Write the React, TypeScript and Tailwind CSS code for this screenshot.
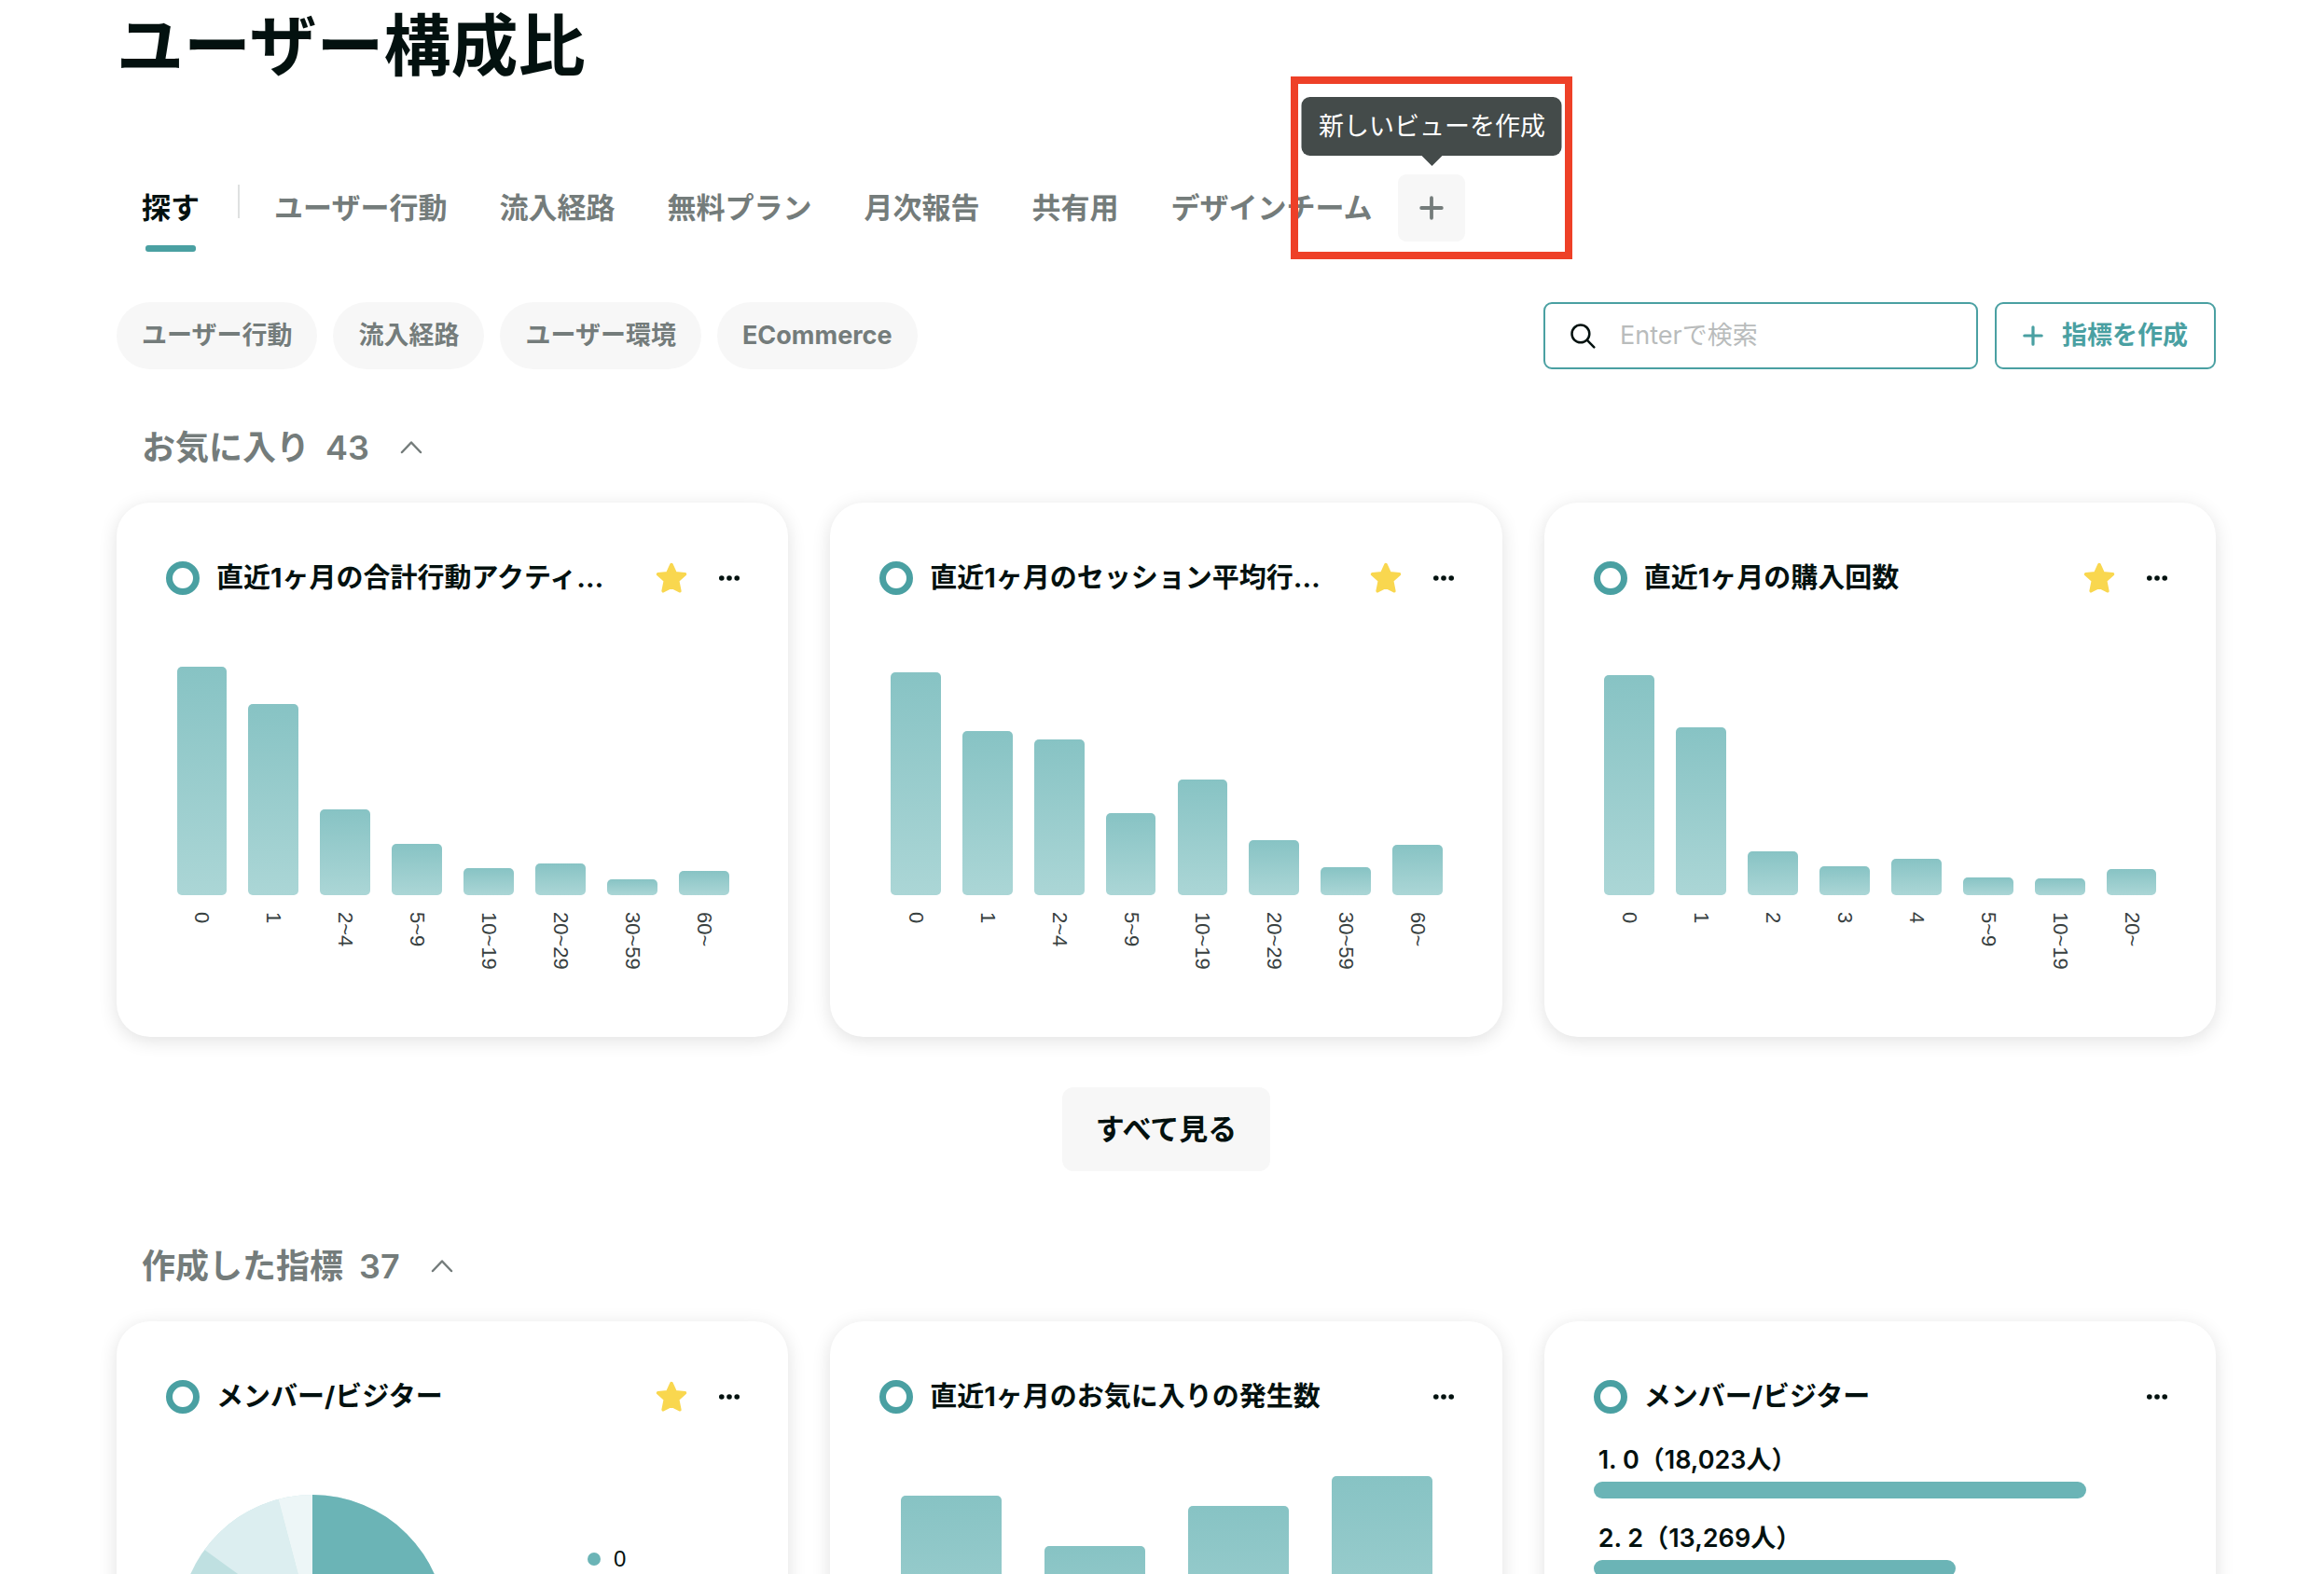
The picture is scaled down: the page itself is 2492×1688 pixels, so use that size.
import { useState } from 'react';

type Bar = { label?: string; value: number };

const tabs = ['ユーザー行動', '流入経路', '無料プラン', '月次報告', '共有用', 'デザインチーム'];
const chips = ['ユーザー行動', '流入経路', 'ユーザー環境', 'ECommerce'];

const activity: Bar[] = [
  { label: '0', value: 245 },
  { label: '1', value: 205 },
  { label: '2~4', value: 92 },
  { label: '5~9', value: 55 },
  { label: '10~19', value: 29 },
  { label: '20~29', value: 34 },
  { label: '30~59', value: 17 },
  { label: '60~', value: 26 },
];

const sessions: Bar[] = [
  { label: '0', value: 239 },
  { label: '1', value: 176 },
  { label: '2~4', value: 167 },
  { label: '5~9', value: 88 },
  { label: '10~19', value: 124 },
  { label: '20~29', value: 59 },
  { label: '30~59', value: 30 },
  { label: '60~', value: 54 },
];

const purchases: Bar[] = [
  { label: '0', value: 236 },
  { label: '1', value: 180 },
  { label: '2', value: 47 },
  { label: '3', value: 31 },
  { label: '4', value: 39 },
  { label: '5~9', value: 19 },
  { label: '10~19', value: 18 },
  { label: '20~', value: 28 },
];

const favorites: Bar[] = [{ value: 234 }, { value: 180 }, { value: 223 }, { value: 255 }];

const ranking = [
  { label: '1. 0（18,023人）', count: 18023 },
  { label: '2. 2（13,269人）', count: 13269 },
];

function PlusIcon({ className }: { className?: string }) {
  return (
    <svg viewBox="0 0 24 24" className={className} fill="none" stroke="currentColor" strokeWidth="3.5" strokeLinecap="round">
      <path d="M12 2v20M2 12h20" />
    </svg>
  );
}

function StarIcon() {
  return (
    <svg viewBox="0 0 34 34" className="size-[34px]" fill="#f9d74f" stroke="#f9d74f" strokeWidth="3.5" strokeLinejoin="round">
      <path d="M17 2.500l4.200 9.300 10.300 1-7.800 7 2.200 11L17 26.300 8.100 30.800l2.200-11-7.800-7 10.300-1z" />
    </svg>
  );
}

function Card({ title, starred, children }: { title: string; starred?: boolean; children: React.ReactNode }) {
  return (
    <article className="flex h-[573px] min-w-0 flex-col rounded-[36px] bg-white pt-[60px] pr-[52px] pl-[53px] shadow-[0_4px_20px_rgba(0,0,0,0.12)]">
      <header className="flex h-[42px] items-center">
        <span className="size-9 shrink-0 rounded-full border-[7px] border-[#4aa0a2]" />
        <h3 className="ml-[18px] min-w-0 flex-1 truncate text-[29px] leading-[42px] font-bold">{title}</h3>
        {starred && (
          <button aria-label="お気に入り" className="ml-4 shrink-0">
            <StarIcon />
          </button>
        )}
        <button aria-label="メニュー" className="ml-[34px] shrink-0">
          <svg viewBox="0 0 22 6" className="h-[6px] w-[22px]" fill="currentColor">
            <circle cx="2.800" cy="3" r="2.800" />
            <circle cx="11" cy="3" r="2.800" />
            <circle cx="19.200" cy="3" r="2.800" />
          </svg>
        </button>
      </header>
      {children}
    </article>
  );
}

function BarChart({ bars }: { bars: Bar[] }) {
  return (
    <div className="mt-[63px] flex">
      {bars.map((bar, i) => (
        <div key={i} className="flex flex-1 flex-col items-center">
          <div className="flex h-64 w-full items-end justify-center">
            <div
              className="w-[70%] rounded-[5px] bg-linear-to-b from-[#87c3c4] to-[#abd6d6]"
              style={{ height: bar.value }}
            />
          </div>
          {bar.label && (
            <span className="mt-[18px] font-['Liberation_Sans',sans-serif] text-[22px] leading-[28px] whitespace-nowrap text-[#37403f] [writing-mode:vertical-rl]">
              {bar.label}
            </span>
          )}
        </div>
      ))}
    </div>
  );
}

function PieChart() {
  return (
    <div className="mt-[84px] flex">
      <svg viewBox="-143 -143 286 286" className="ml-[14px] size-[286px] shrink-0">
        <circle r="143" fill="#bfe0e1" />
        <path d="M0 0V-143A143 143 0 0 1 0 143z" fill="#6bb4b6" />
        <path d="M0 0L-115.700-84A143 143 0 0 1-36.600-138.200z" fill="#dceef0" />
        <path d="M0 0L-36.600-138.200A143 143 0 0 1 0-143z" fill="#edf6f7" />
      </svg>
      <ul className="mt-[53px] ml-[152px]">
        <li className="flex items-center gap-[14px] font-['Liberation_Sans',sans-serif] text-[24px] leading-[32px]">
          <span className="size-[14px] rounded-full bg-[#6bb4b6]" />0
        </li>
      </ul>
    </div>
  );
}

function RankingList() {
  return (
    <ol className="mt-[29px] flex flex-col gap-[25px]">
      {ranking.map((row) => (
        <li key={row.label}>
          <p className="pl-[5px] text-[27px] leading-9 font-semibold">{row.label}</p>
          <div
            className="mt-[5px] h-[18px] rounded-full bg-[#6bb4b6]"
            style={{ width: `${(row.count / 21000) * 100}%` }}
          />
        </li>
      ))}
    </ol>
  );
}

function Section({ title, count, children }: { title: string; count: number; children: React.ReactNode }) {
  const [open, setOpen] = useState(true);

  return (
    <section>
      <button
        onClick={() => setOpen(!open)}
        aria-expanded={open}
        className="ml-[27px] flex items-center text-[36px] leading-[54px] font-bold text-[#747c7b]"
      >
        <h2>{title}</h2>
        <span className="ml-[17px] font-semibold">{count}</span>
        <svg viewBox="0 0 24 14" className="ml-[33px] h-[14px] w-6" fill="none" stroke="currentColor" strokeWidth="2.500" strokeLinecap="round" strokeLinejoin="round">
          <path d="M2 12L12 1.500l10 10.500" />
        </svg>
      </button>
      {open && <div className="mt-[32px] grid grid-cols-3 gap-[45px]">{children}</div>}
    </section>
  );
}

export default function App() {
  const [keyword, setKeyword] = useState('');

  return (
    <main className="h-screen overflow-hidden bg-white pr-[116px] pl-[125px] font-['Inter','Noto_Sans_CJK_JP',sans-serif] text-[#03110f]">
      <h1 className="text-[72px] leading-[98px] font-bold">ユーザー構成比</h1>

      <nav className="mt-[89px] ml-[27px] flex h-[83px] items-start text-[31px] leading-[72px] font-bold text-[#747c7b]">
        <a href="#explore" className="flex flex-col items-center text-[#03110f]">
          探す
          <span className="mt-[4px] h-[7px] w-[54px] rounded-[3px] bg-[#4aa0a2]" />
        </a>
        <span className="mt-[11px] ml-[41px] h-9 w-[2px] bg-[#dfe1e1]" />
        <div className="ml-[37px] flex gap-[56px]">
          {tabs.map((tab) => (
            <a key={tab} href="#view">
              {tab}
            </a>
          ))}
        </div>
        <div className="relative ml-[28px]">
          <button aria-label="新しいビューを作成" className="flex size-[72px] items-center justify-center rounded-[9px] bg-[#f7f7f7]">
            <PlusIcon className="size-[26px]" />
          </button>
          <div
            role="tooltip"
            className="absolute bottom-[92px] left-1/2 -translate-x-1/2 rounded-[9px] bg-[#444b4a] px-[18px] text-[27px] leading-[63px] font-normal whitespace-nowrap text-white"
          >
            新しいビューを作成
            <svg viewBox="0 0 22 11" className="absolute top-full left-1/2 h-[11px] w-[22px] -translate-x-1/2" fill="#444b4a">
              <path d="M0 0h22L11 11z" />
            </svg>
          </div>
          <div className="pointer-events-none absolute -bottom-[19px] left-1/2 h-[196px] w-[302px] -translate-x-1/2 border-8 border-[#ee4027]" />
        </div>
      </nav>

      <div className="mt-[54px] flex h-[72px] items-center justify-between text-[27px]">
        <div className="flex gap-[17px] font-bold text-[#747c7b]">
          {chips.map((chip) => (
            <button key={chip} className="h-[72px] rounded-full bg-[#f7f7f7] px-[27px]">
              {chip}
            </button>
          ))}
        </div>
        <div className="flex gap-[18px]">
          <label className="flex h-[72px] w-[466px] items-center rounded-[9px] border-2 border-[#4aa0a2] px-[27px]">
            <svg viewBox="0 0 27 27" className="size-[27px] shrink-0" fill="none" stroke="currentColor" strokeWidth="2.500" strokeLinecap="round">
              <circle cx="10.900" cy="10.900" r="9.400" />
              <path d="M17.700 17.700l7.600 7.600" />
            </svg>
            <input
              type="search"
              aria-label="検索"
              value={keyword}
              onChange={(e) => setKeyword(e.target.value)}
              placeholder="Enterで検索"
              className="ml-[26px] w-full min-w-0 outline-none placeholder:text-[#b9bcbc]"
            />
          </label>
          <button className="flex h-[72px] items-center gap-[20px] rounded-[9px] border-2 border-[#4aa0a2] px-[28px] font-bold text-[#4aa0a2]">
            <PlusIcon className="size-[22px]" />
            指標を作成
          </button>
        </div>
      </div>

      <div className="mt-[57px]">
        <Section title="お気に入り" count={43}>
          <Card title="直近1ヶ月の合計行動アクティ…" starred>
            <BarChart bars={activity} />
          </Card>
          <Card title="直近1ヶ月のセッション平均行…" starred>
            <BarChart bars={sessions} />
          </Card>
          <Card title="直近1ヶ月の購入回数" starred>
            <BarChart bars={purchases} />
          </Card>
        </Section>
      </div>

      <div className="mt-[54px] mb-[75px] flex justify-center">
        <button className="h-[90px] rounded-xl bg-[#f7f7f7] px-9 text-[31px] font-bold">すべて見る</button>
      </div>

      <Section title="作成した指標" count={37}>
        <Card title="メンバー/ビジター" starred>
          <PieChart />
        </Card>
        <Card title="直近1ヶ月のお気に入りの発生数">
          <BarChart bars={favorites} />
        </Card>
        <Card title="メンバー/ビジター">
          <RankingList />
        </Card>
      </Section>
    </main>
  );
}
